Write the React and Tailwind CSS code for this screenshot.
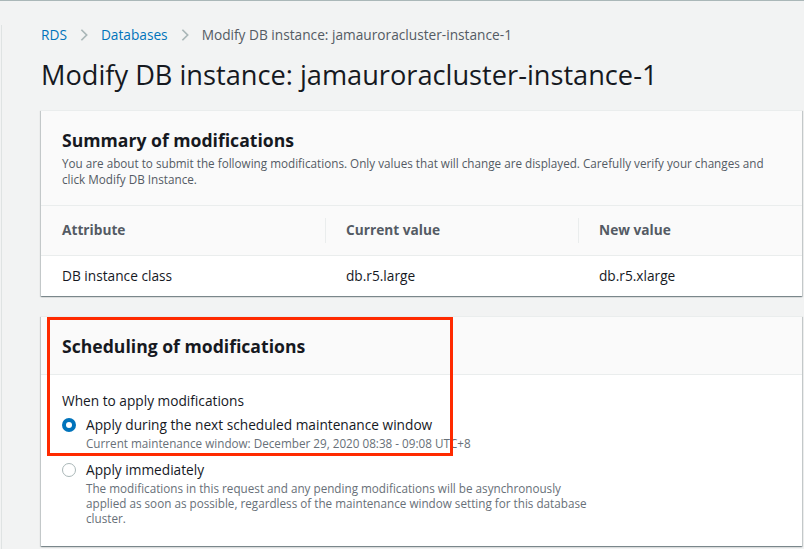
import React from "react";

function Chevron() {
  return (
    <svg width="14" height="14" viewBox="0 0 16 16" className="mx-[10px]" fill="none" stroke="#aab7b8" strokeWidth="2">
      <path d="M5 2l6 6-6 6" />
    </svg>
  );
}

const shadow =
  "shadow-[0_1px_1px_0_rgba(0,28,36,0.3),1px_1px_1px_0_rgba(0,28,36,0.15),-1px_1px_1px_0_rgba(0,28,36,0.15)]";

export default function App() {
  return (
    <div
      className="w-[804px] h-[549px] overflow-hidden bg-[#f2f3f3] border-t border-[#aab7b8] text-[#16191f]"
      style={{ fontFamily: '"Open Sans", "Noto Sans", sans-serif' }}
    >
      <div className="h-full border-l border-[#dfe3e3] ml-px pl-[39px] pr-[2px]">
        {/* Breadcrumb */}
        <div className="flex items-center h-[20px] mt-[24px] text-[13.7px] leading-[20px]">
          <span className="text-[#0073bb]">RDS</span>
          <Chevron />
          <span className="text-[#0073bb]">Databases</span>
          <Chevron />
          <span className="text-[#545b64]">Modify DB instance: jamauroracluster-instance-1</span>
        </div>
        {/* Title */}
        <h1 className="mt-[12px] text-[27.2px] leading-[36px] font-normal text-[#16191f]">
          Modify DB instance: jamauroracluster-instance-1
        </h1>

        {/* Summary card */}
        <div className={`mt-[17px] bg-white ${shadow} border-t border-[#eaeded]`}>
          <div className="bg-[#fafafa] px-[21px] pt-[17px] pb-[18px] border-b border-[#eaeded]">
            <h2 className="text-[17.6px] leading-[24px] font-bold">Summary of modifications</h2>
            <p className="text-[11.7px] leading-[16px] text-[#545b64] mt-[3px]">
              You are about to submit the following modifications. Only values that will change are displayed. Carefully verify your changes and click Modify DB Instance.
            </p>
          </div>
          <div className="grid grid-cols-[285px_253px_1fr] bg-[#fafafa] h-[50px] items-center border-b border-[#eaeded] text-[13.7px] font-bold text-[#545b64]">
            <div className="pl-[21px] border-r border-[#eaeded] h-[25px] flex items-center">Attribute</div>
            <div className="pl-[20px] border-r border-[#eaeded] h-[25px] flex items-center">Current value</div>
            <div className="pl-[20px] h-[25px] flex items-center">New value</div>
          </div>
          <div className="grid grid-cols-[285px_253px_1fr] h-[40px] items-center text-[13.7px]">
            <div className="pl-[21px]">DB instance class</div>
            <div className="pl-[20px]">db.r5.large</div>
            <div className="pl-[20px]">db.r5.xlarge</div>
          </div>
        </div>

        {/* Scheduling card */}
        <div className={`relative mt-[20px] bg-white h-[230px] ${shadow} border-t border-[#eaeded]`}>
          <div className="bg-[#fafafa] h-[58px] px-[21px] flex items-center border-b border-[#eaeded]">
            <h2 className="text-[17.6px] leading-[24px] font-bold">Scheduling of modifications</h2>
          </div>
          <div className="px-[21px] pt-[15px]">
            <div className="text-[13.7px] leading-[22px]">When to apply modifications</div>
            <div className="flex mt-[2px]">
              <div className="w-[14px] h-[14px] mt-[4px] rounded-full bg-[#0073bb] flex items-center justify-center shrink-0">
                <div className="w-[6px] h-[6px] rounded-full bg-white" />
              </div>
              <div className="ml-[10px]">
                <div className="text-[13.7px] leading-[22px]">Apply during the next scheduled maintenance window</div>
                <div className="text-[11.7px] leading-[14px] text-[#687078]">Current maintenance window: December 29, 2020 08:38 - 09:08 UTC+8</div>
              </div>
            </div>
            <div className="flex mt-[9px]">
              <div className="w-[14px] h-[14px] mt-[4px] rounded-full border border-[#aab7b8] bg-white shrink-0" />
              <div className="ml-[10px] w-[510px]">
                <div className="text-[13.7px] leading-[22px]">Apply immediately</div>
                <div className="text-[11.7px] leading-[15px] text-[#687078]">
                  The modifications in this request and any pending modifications will be asynchronously applied as soon as possible, regardless of the maintenance window setting for this database cluster.
                </div>
              </div>
            </div>
          </div>
          <div className="absolute left-[6px] top-0 w-[406px] h-[139px] border-[3px] border-[#ff2a00] pointer-events-none" />
        </div>
      </div>
    </div>
  );
}
